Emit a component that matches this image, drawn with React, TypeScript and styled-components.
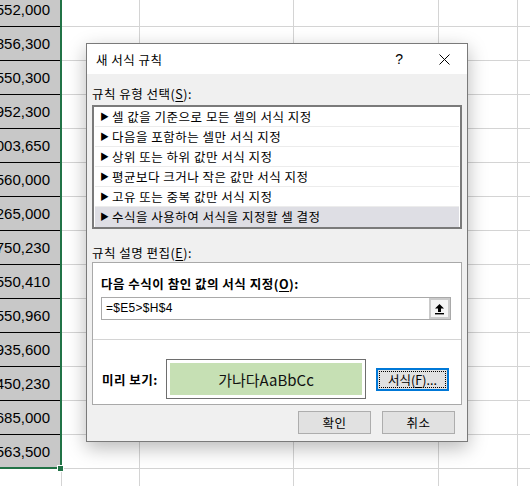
import React from 'react';
import styled, { createGlobalStyle } from 'styled-components';

const GlobalStyle = createGlobalStyle`
  html, body {
    margin: 0;
    padding: 0;
    background: #fff;
    overflow: hidden;
  }
`;

const Page = styled.div`
  position: relative;
  width: 530px;
  height: 486px;
  overflow: hidden;
  font-family: 'Noto Sans CJK KR', 'Noto Sans', sans-serif;
`;

const Sheet = styled.div`
  display: grid;
  grid-template-columns: 62px 78px 154px 145px 79px 80px;
  grid-auto-rows: 34px;
  margin-top: -7px;
`;

const Cell = styled.div<{ $shaded?: boolean }>`
  box-sizing: border-box;
  border-right: 1px solid #d4d4d4;
  border-bottom: 1px solid ${(p) => (p.$shaded ? '#000' : '#d4d4d4')};
  background: ${(p) => (p.$shaded ? '#c8c8c8' : '#fff')};
  display: flex;
  align-items: center;
  justify-content: flex-end;
  padding: 0 11px 0 0;
  overflow: hidden;
  white-space: nowrap;
  font-family: 'Liberation Sans', Arial, sans-serif;
  font-size: 15px;
  color: #000;
`;

const Selection = styled.div`
  position: absolute;
  left: -4px;
  top: -4px;
  width: 62px;
  height: 469px;
  border: 2px solid #217346;
  pointer-events: none;
`;

const Handle = styled.div`
  position: absolute;
  left: 58px;
  top: 466px;
  width: 5px;
  height: 5px;
  background: #217346;
  outline: 1px solid #fff;
`;

const Dialog = styled.div`
  position: absolute;
  left: 86px;
  top: 43px;
  width: 382px;
  height: 399px;
  box-sizing: border-box;
  border: 1px solid #7a7a7a;
  background: #f0f0f0;
  box-shadow: 0 6px 18px rgba(0, 0, 0, 0.28);
  display: flex;
  flex-direction: column;
  font-size: 12.5px;
  letter-spacing: 0.5px;
  color: #000;
`;

const TitleBar = styled.div`
  height: 30px;
  background: #fff;
  display: flex;
  align-items: center;
  padding-left: 9px;
`;

const Title = styled.div`
  flex: 1;
`;

const TitleButton = styled.div`
  width: 45px;
  height: 30px;
  display: flex;
  align-items: center;
  justify-content: center;
  font-family: 'Liberation Sans', Arial, sans-serif;
  font-size: 14px;
`;

const Body = styled.div`
  flex: 1;
  display: flex;
  flex-direction: column;
  padding: 11px 5px 0 5px;
`;

const Label = styled.div<{ $bold?: boolean }>`
  height: 18px;
  line-height: 18px;
  font-weight: ${(p) => (p.$bold ? 700 : 400)};
  white-space: nowrap;
`;

const Key = styled.span`
  text-decoration: underline;
  text-underline-offset: 2px;
`;

const ListBox = styled.div`
  margin-top: 2px;
  height: 124px;
  box-sizing: border-box;
  border: 2px solid #7a7a7a;
  background: #fff;
  padding: 0 1px;
`;

const ListItem = styled.div<{ $selected?: boolean }>`
  height: 20px;
  box-sizing: border-box;
  display: flex;
  align-items: center;
  gap: 3px;
  padding-left: 5px;
  border-bottom: 1px solid ${(p) => (p.$selected ? 'transparent' : '#ececec')};
  background: ${(p) => (p.$selected ? '#dedee4' : '#fff')};
  white-space: nowrap;
`;

const Arrow = styled.span`
  font-size: 9px;
  width: 9px;
`;

const Section = styled.div`
  margin-top: 15px;
`;

const EditBox = styled.div`
  height: 143px;
  box-sizing: border-box;
  border: 1px solid #a9a9a9;
  background: #fff;
  display: flex;
  flex-direction: column;
`;

const EditTop = styled.div`
  padding: 12px 10px 0 8px;
  height: 77px;
  box-sizing: border-box;
  border-bottom: 1px solid #d4d4d4;
`;

const InputRow = styled.div`
  margin-top: 4px;
  height: 23px;
  box-sizing: border-box;
  border: 1px solid #a9a9a9;
  display: flex;
`;

const InputText = styled.div`
  flex: 1;
  padding-left: 4px;
  line-height: 21px;
  font-family: 'Liberation Sans', Arial, sans-serif;
  font-size: 12px;
  letter-spacing: 0.3px;
`;

const CollapseButton = styled.div`
  width: 21px;
  box-sizing: border-box;
  border: 2px solid #cacaca;
  background: #f4f4f4;
  display: flex;
  align-items: center;
  justify-content: center;
`;

const PreviewRow = styled.div`
  flex: 1;
  display: flex;
  align-items: center;
  padding: 19px 10px 5px 9px;
`;

const PreviewLabel = styled.div`
  width: 64px;
  font-weight: 700;
  white-space: nowrap;
`;

const PreviewBox = styled.div`
  width: 200px;
  height: 40px;
  box-sizing: border-box;
  border: 1px solid #6e6e6e;
  padding: 3px;
`;

const PreviewFill = styled.div`
  height: 100%;
  background: #c6e0b4;
  display: flex;
  align-items: center;
  justify-content: center;
  font-size: 15px;
  letter-spacing: 0;
  color: #111;
`;

const Button = styled.div<{ $focused?: boolean }>`
  width: 73px;
  height: 23px;
  box-sizing: border-box;
  border: ${(p) => (p.$focused ? '2px solid #0078d7' : '1px solid #adadad')};
  background: #e1e1e1;
  display: flex;
  align-items: center;
  justify-content: center;
  white-space: nowrap;
`;

const FocusRect = styled.div`
  flex: 1;
  align-self: stretch;
  margin: 1px;
  border: 1px dotted #000;
  display: flex;
  align-items: center;
  justify-content: center;
  letter-spacing: 0;
`;

const FormatButton = styled(Button)`
  margin-left: 10px;
`;

const Footer = styled.div`
  display: flex;
  justify-content: flex-end;
  gap: 11px;
  padding: 6px 7px 0 0;
`;

// leading digit of each number is clipped by the column edge
const values = [
  '6552,000',
  '3856,300',
  '1550,300',
  '6952,300',
  '1003,650',
  '3560,000',
  '1265,000',
  '1750,230',
  '6550,410',
  '6550,960',
  '1935,600',
  '4450,230',
  '5685,000',
  '5563,500',
];

const rules = [
  '셀 값을 기준으로 모든 셀의 서식 지정',
  '다음을 포함하는 셀만 서식 지정',
  '상위 또는 하위 값만 서식 지정',
  '평균보다 크거나 작은 값만 서식 지정',
  '고유 또는 중복 값만 서식 지정',
  '수식을 사용하여 서식을 지정할 셀 결정',
];

const CloseIcon = () => (
  <svg width="11" height="11" viewBox="0 0 11 11">
    <path d="M0.5 0.5 L10.5 10.5 M10.5 0.5 L0.5 10.5" stroke="#000" strokeWidth="1" />
  </svg>
);

const UpIcon = () => (
  <svg width="11" height="12" viewBox="0 0 11 12">
    <path d="M5.5 1 L10 5.5 L7 5.5 L7 9 L4 9 L4 5.5 L1 5.5 Z" fill="#000" />
    <rect x="1" y="10" width="9" height="1.4" fill="#000" />
  </svg>
);

export default function App() {
  const rows = Array.from({ length: 16 }, (_, r) => r);
  return (
    <>
      <GlobalStyle />
      <Page>
        <Sheet>
          {rows.map((r) => (
            <React.Fragment key={r}>
              <Cell $shaded={r < 14}>{r < 14 ? values[r] : ''}</Cell>
              <Cell />
              <Cell />
              <Cell />
              <Cell />
              <Cell />
            </React.Fragment>
          ))}
        </Sheet>
        <Selection />
        <Handle />

        <Dialog>
          <TitleBar>
            <Title>새 서식 규칙</Title>
            <TitleButton>?</TitleButton>
            <TitleButton>
              <CloseIcon />
            </TitleButton>
          </TitleBar>
          <Body>
            <Label>
              규칙 유형 선택(<Key>S</Key>):
            </Label>
            <ListBox>
              {rules.map((rule, i) => (
                <ListItem key={rule} $selected={i === rules.length - 1}>
                  <Arrow>▶</Arrow>
                  {rule}
                </ListItem>
              ))}
            </ListBox>
            <Section>
              <Label>
                규칙 설명 편집(<Key>E</Key>):
              </Label>
              <EditBox>
                <EditTop>
                  <Label $bold>
                    다음 수식이 참인 값의 서식 지정(<Key>O</Key>):
                  </Label>
                  <InputRow>
                    <InputText>=$E5&gt;$H$4</InputText>
                    <CollapseButton>
                      <UpIcon />
                    </CollapseButton>
                  </InputRow>
                </EditTop>
                <PreviewRow>
                  <PreviewLabel>미리 보기:</PreviewLabel>
                  <PreviewBox>
                    <PreviewFill>가나다AaBbCc</PreviewFill>
                  </PreviewBox>
                  <FormatButton $focused>
                    <FocusRect>
                      서식(<Key>F</Key>)...
                    </FocusRect>
                  </FormatButton>
                </PreviewRow>
              </EditBox>
            </Section>
            <Footer>
              <Button>확인</Button>
              <Button>취소</Button>
            </Footer>
          </Body>
        </Dialog>
      </Page>
    </>
  );
}
